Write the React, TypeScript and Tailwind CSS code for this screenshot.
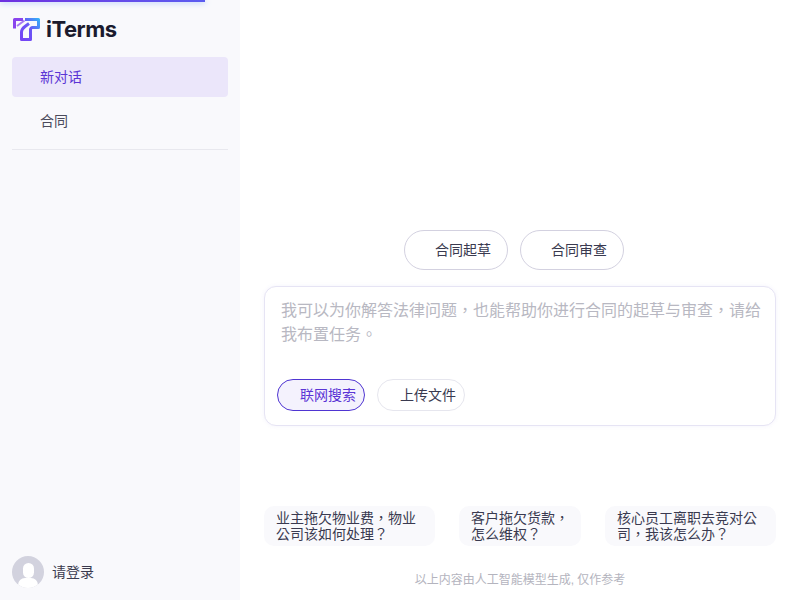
import React from 'react';

const font = { fontFamily: '"Liberation Sans", "Noto Sans CJK TC", sans-serif' };

const Logo: React.FC = () => (
  <div className="flex items-center gap-[6px] h-[24px]">
    <svg width="28" height="24" viewBox="0 0 28 24" fill="none">
      <defs>
        <linearGradient id="lg" x1="2" y1="22" x2="27" y2="2" gradientUnits="userSpaceOnUse">
          <stop offset="0" stopColor="#7a3cf5" />
          <stop offset="0.6" stopColor="#6a55f5" />
          <stop offset="1" stopColor="#35b0f8" />
        </linearGradient>
      </defs>
      <path d="M2.5 11.5V2.5H11" stroke="#8a45ee" strokeWidth="3" strokeLinejoin="round" />
      <path d="M5 9L12.5 3.5" stroke="#a77bf3" strokeWidth="2" />
      <path
        d="M13 2.5H26.5V10.5H20.5C19.5 10.5 18.5 11.5 18.5 12.5V22.5H9.5V15C9.5 13 11 11 13 9.5L17 6.5"
        stroke="url(#lg)"
        strokeWidth="3"
        strokeLinejoin="round"
      />
    </svg>
    <span className="text-[22px] font-bold text-[#1b1b2e] tracking-[-0.5px]" style={{ fontFamily: 'Inter, sans-serif' }}>
      iTerms
    </span>
  </div>
);

const Pill: React.FC<{ label: string }> = ({ label }) => (
  <button className="h-[40px] w-[104px] rounded-full border border-[#d3d1e0] bg-white pl-[30px] text-left text-[14px] text-[#3a3a50]">
    {label}
  </button>
);

const Suggestion: React.FC<{ text: string; width: string }> = ({ text, width }) => (
  <div className={`${width} h-[40px] rounded-[10px] bg-[#f9f9fc] px-[12px] pt-[4px] text-[14px] leading-[16px] text-[#3a3a50]`}>
    {text}
  </div>
);

export default function App() {
  return (
    <div className="relative flex h-[600px] w-[800px] overflow-hidden bg-white" style={font}>
      <div className="absolute left-0 top-0 h-[2px] w-[205px] bg-gradient-to-r from-[#6d2fe0] to-[#5b5cf0] shadow-[0_0_6px_#7aa7ff]" />

      <aside className="flex w-[240px] shrink-0 flex-col bg-[#f9f9fc] px-[12px]">
        <div className="pt-[17px] pb-[16px]">
          <Logo />
        </div>
        <div className="flex h-[40px] items-center rounded-[4px] bg-[#ebe6fa] pl-[28px] text-[14px] text-[#5b35d5]">新对话</div>
        <div className="mt-[4px] flex h-[40px] items-center pl-[28px] text-[14px] text-[#4b4b5c]">合同</div>
        <div className="mt-[8px] h-px bg-[#e8e8ee]" />
        <div className="mt-auto mb-[12px] flex items-center gap-[8px]">
          <div className="relative h-[32px] w-[32px] overflow-hidden rounded-full bg-[#d2d2de]">
            <div className="absolute left-[11px] top-[7px] h-[15px] w-[11px] rounded-full bg-white" />
            <div className="absolute left-[6px] top-[22px] h-[14px] w-[20px] rounded-full bg-white" />
          </div>
          <span className="text-[14px] text-[#3b3b4f]">请登录</span>
        </div>
      </aside>

      <main className="flex min-w-0 flex-1 flex-col px-[24px] pt-[230px]">
        <div className="flex justify-center gap-[12px] pr-[12px]">
          <Pill label="合同起草" />
          <Pill label="合同审查" />
        </div>

        <div className="mt-[16px] flex h-[140px] flex-col rounded-[12px] border border-[#e6e4f4] bg-white px-[12px] pb-[14px] pt-[12px] shadow-[0_0_4px_rgba(110,100,220,0.08)]">
          <p className="pl-[4px] text-[16px] leading-[24px] text-[#b8b8c2]">
            我可以为你解答法律问题，也能帮助你进行合同的起草与审查，请给我布置任务。
          </p>
          <div className="mt-auto flex gap-[12px]">
            <button className="h-[32px] w-[88px] rounded-full border border-[#4f35d2] bg-[#f4f2fd] pl-[22px] text-left text-[14px] text-[#5b35d5]">
              联网搜索
            </button>
            <button className="h-[32px] w-[88px] rounded-full border border-[#e6e6ee] bg-white pl-[22px] text-left text-[14px] text-[#3a3a50]">
              上传文件
            </button>
          </div>
        </div>

        <div className="mt-[80px] flex justify-between">
          <Suggestion width="w-[171px]" text="业主拖欠物业费，物业公司该如何处理？" />
          <Suggestion width="w-[122px]" text="客户拖欠货款，怎么维权？" />
          <Suggestion width="w-[171px]" text="核心员工离职去竞对公司，我该怎么办？" />
        </div>

        <p className="mt-[26px] text-center text-[12px] leading-[16px] text-[#b4b4be]">以上内容由人工智能模型生成, 仅作参考</p>
      </main>
    </div>
  );
}
